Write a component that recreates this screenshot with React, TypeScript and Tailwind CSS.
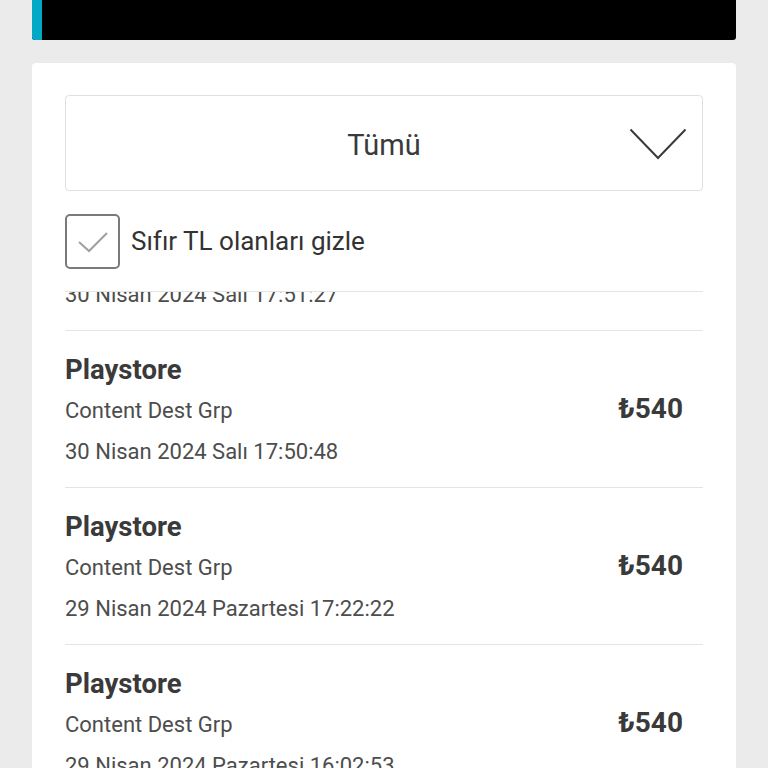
import { useLayoutEffect, useRef } from "react";

type Row = {
  title: string;
  desc: string;
  date: string;
  amount: string;
};

const rows: Row[] = [
  { title: "Playstore", desc: "Content Dest Grp", date: "30 Nisan 2024 Salı 17:51:27", amount: "₺540" },
  { title: "Playstore", desc: "Content Dest Grp", date: "30 Nisan 2024 Salı 17:50:48", amount: "₺540" },
  { title: "Playstore", desc: "Content Dest Grp", date: "29 Nisan 2024 Pazartesi 17:22:22", amount: "₺540" },
  { title: "Playstore", desc: "Content Dest Grp", date: "29 Nisan 2024 Pazartesi 16:02:53", amount: "₺540" },
  { title: "Playstore", desc: "Content Dest Grp", date: "28 Nisan 2024 Pazar 12:10:05", amount: "₺540" },
];

function RowItem({ row }: { row: Row }) {
  return (
    <div className="flex h-[157px] items-center justify-between border-t border-[#e4e4e4] pr-[20px]">
      <div className="flex flex-col pt-[4px]">
        <div className="text-[27.5px] font-bold leading-[36px] text-[#3a3a3a]">{row.title}</div>
        <div className="mt-[5px] text-[22px] leading-[36px] text-[#4d4d4d]">{row.desc}</div>
        <div className="mt-[5px] text-[22px] leading-[36px] text-[#4d4d4d]">{row.date}</div>
      </div>
      <div className="text-[28px] font-bold text-[#3a3a3a]">{row.amount}</div>
    </div>
  );
}

export default function App() {
  const listRef = useRef<HTMLDivElement>(null);

  useLayoutEffect(() => {
    if (listRef.current) listRef.current.scrollTop = 119;
  }, []);

  return (
    <div
      className="h-[768px] overflow-hidden bg-[#ebebeb] px-[32px]"
      style={{ fontFamily: "Roboto, 'Liberation Sans', sans-serif" }}
    >
      <div className="flex h-[40px] overflow-hidden rounded-b-[3px] bg-black">
        <div className="w-[10px] bg-[#00a9c8]" />
      </div>

      <div className="mt-[23px] rounded-[4px] bg-white px-[33px] pt-[32px]">
        <div className="relative flex h-[96px] items-center justify-center rounded-[4px] border border-[#e0e0e0]">
          <span className="mt-[5px] text-[29px] text-[#3a3a3a]">Tümü</span>
          <svg
            className="absolute right-[15px] top-[32px]"
            width="58"
            height="32"
            viewBox="0 0 58 32"
            fill="none"
          >
            <path d="M1.5 1.5 L29 30 L56.5 1.5" stroke="#3a3a3a" strokeWidth="2" />
          </svg>
        </div>

        <div className="mt-[23px] flex items-center gap-[11px]">
          <div className="flex h-[55px] w-[55px] items-center justify-center rounded-[5px] border-2 border-[#7a7a7a]">
            <svg width="32" height="22" viewBox="0 0 32 22" fill="none">
              <path d="M2 11 L12 20 L30 2" stroke="#a0a0a0" strokeWidth="2" />
            </svg>
          </div>
          <span className="text-[26px] text-[#333]">Sıfır TL olanları gizle</span>
        </div>

        <div ref={listRef} className="mt-[22px] h-[500px] overflow-hidden border-t border-[#e4e4e4]">
          {rows.map((r, i) => (
            <RowItem key={i} row={r} />
          ))}
        </div>
      </div>
    </div>
  );
}
